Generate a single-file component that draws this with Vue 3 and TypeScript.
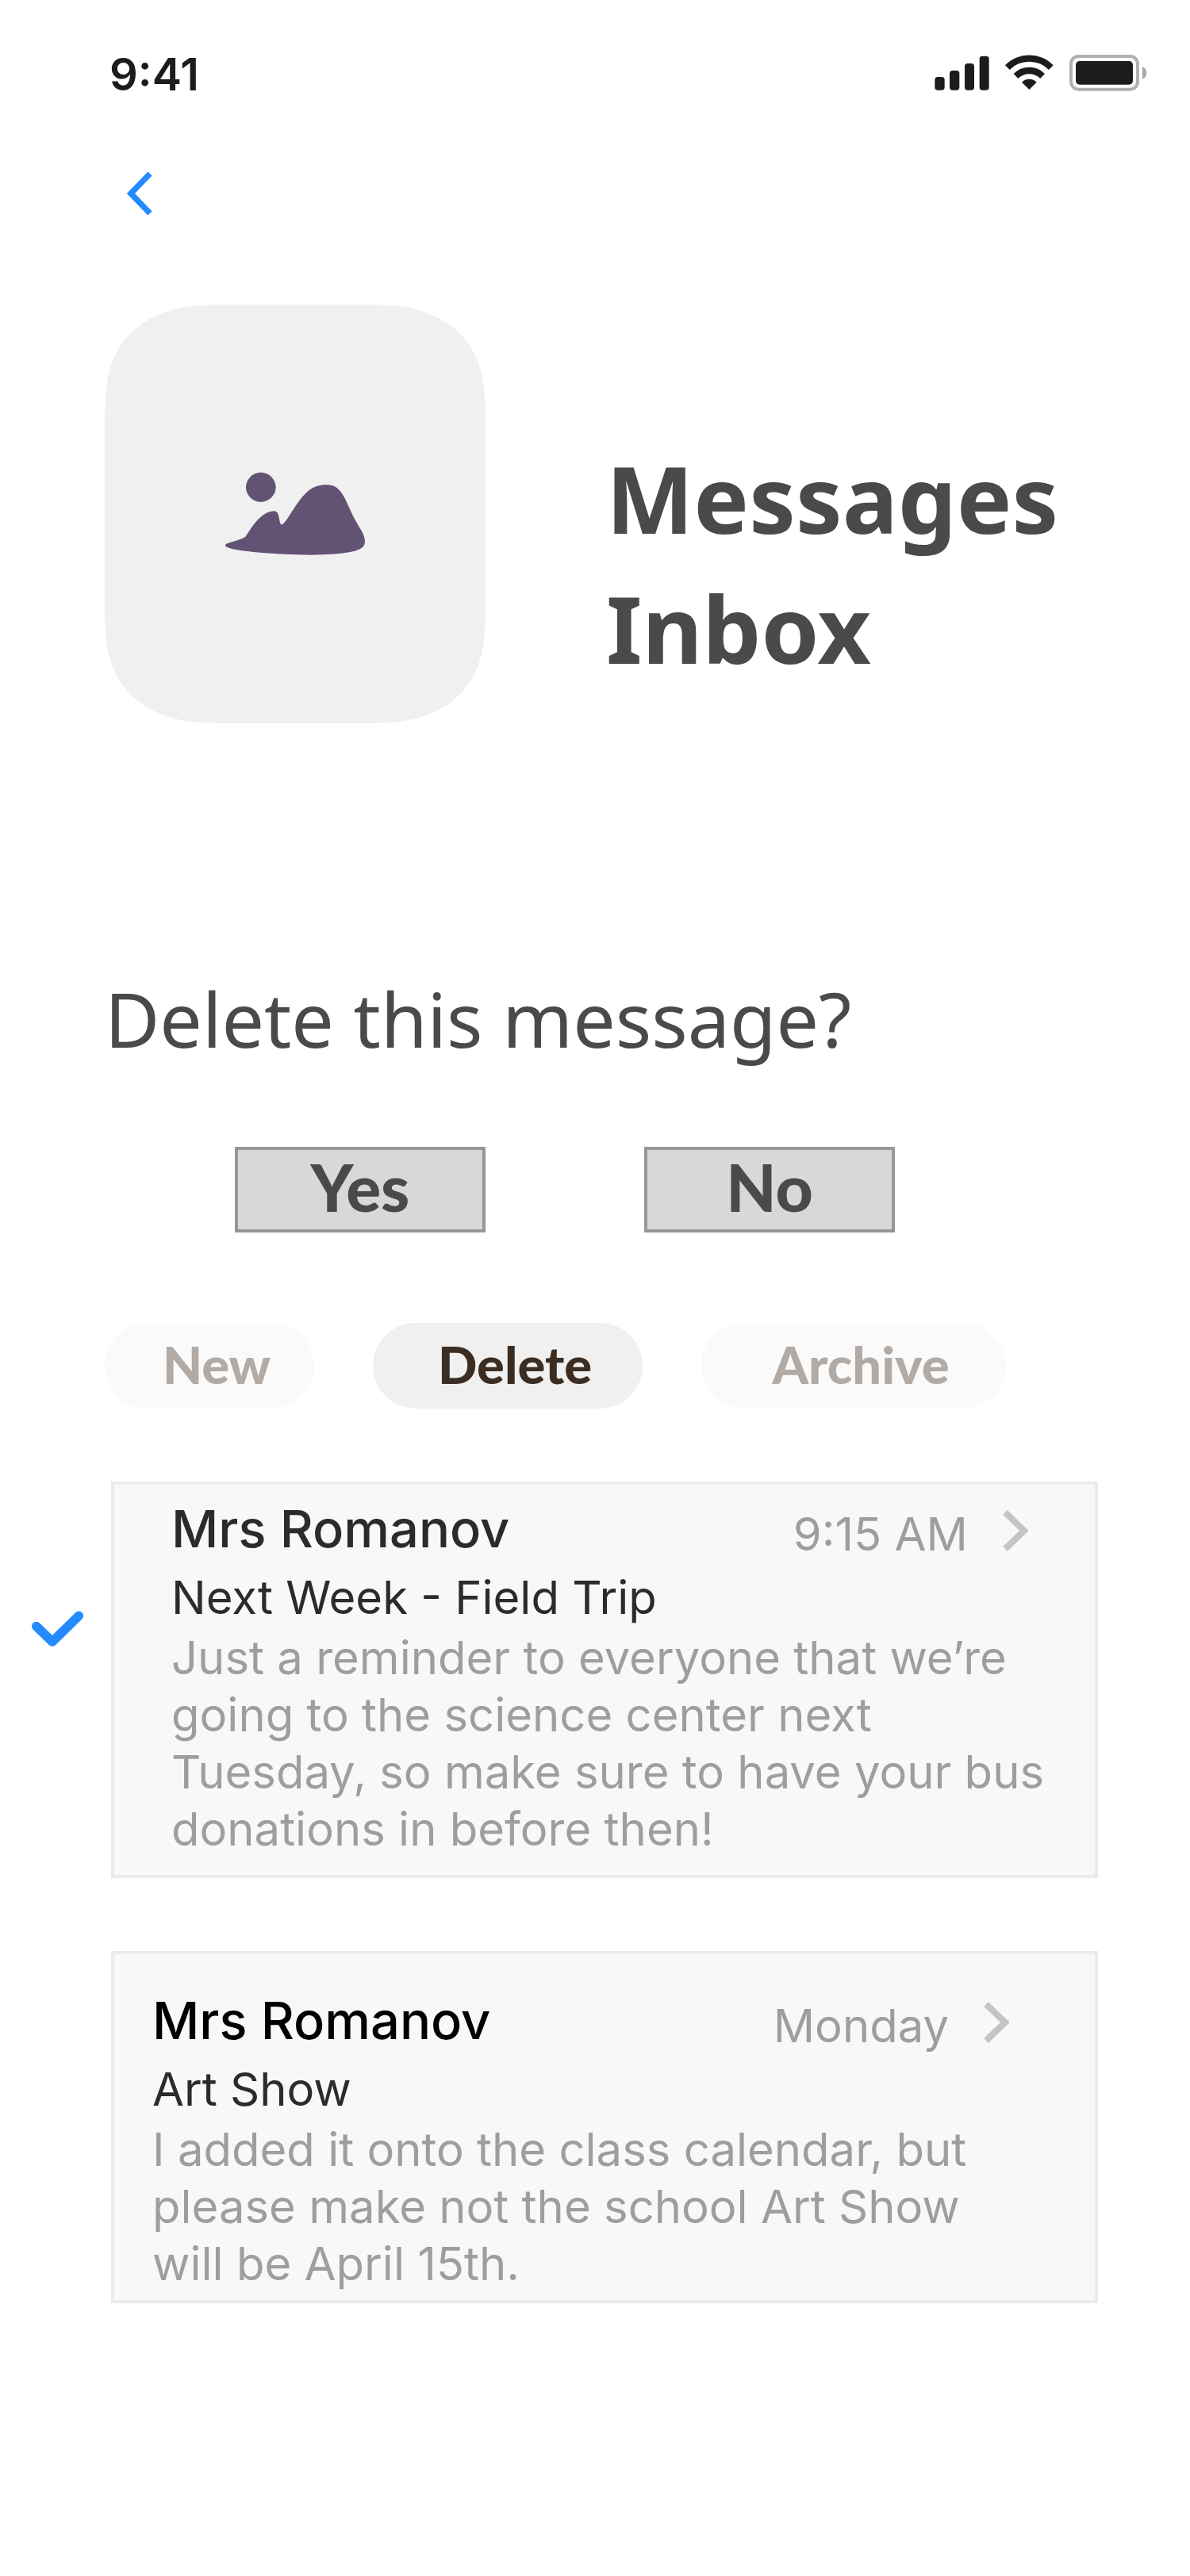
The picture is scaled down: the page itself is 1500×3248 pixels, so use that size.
<script setup lang="ts">
import { ref } from 'vue'

interface Message {
  id: number
  sender: string
  time: string
  subject: string
  body: string
  unread: boolean
  selected: boolean
}

const tabs = ['New', 'Delete', 'Archive'] as const
type Tab = (typeof tabs)[number]
const activeTab = ref<Tab>('Delete')

const messages = ref<Message[]>([
  {
    id: 1,
    sender: 'Mrs Romanov',
    time: '9:15 AM',
    subject: 'Next Week - Field Trip',
    body: 'Just a reminder to everyone that we’re going to the science center next Tuesday, so make sure to have your bus donations in before then!',
    unread: false,
    selected: true,
  },
  {
    id: 2,
    sender: 'Mrs Romanov',
    time: 'Monday',
    subject: 'Art Show',
    body: 'I added it onto the class calendar, but please make not the school Art Show will be April 15th.',
    unread: true,
    selected: false,
  },
])

function confirmDelete(): void {
  messages.value = messages.value.filter((m) => !m.selected)
}

function cancelDelete(): void {
  messages.value.forEach((m) => (m.selected = false))
}
</script>

<template>
  <div class="screen">
    <header class="status">
      <span class="clock">9:41</span>
      <svg class="indicators" viewBox="78 78 810 168" aria-hidden="true">
        <g fill="#1c1c1e">
          <rect x="85" y="171" width="37" height="50" rx="11" />
          <rect x="141" y="147" width="37" height="74" rx="11" />
          <rect x="198" y="120" width="36" height="101" rx="11" />
          <rect x="254" y="92" width="36" height="129" rx="11" />
          <path d="M351 127A126 126 0 0 1 533 127L516 144A104 104 0 0 0 368 144Z" />
          <path d="M383 159A82 82 0 0 1 501 159L484 177A60 60 0 0 0 400 177Z" />
          <path d="M414 191A39 39 0 0 1 470 191L442 219Z" />
          <rect x="618" y="111" width="216" height="89" rx="15" />
        </g>
        <rect x="600" y="93" width="252" height="125" rx="28" fill="none" stroke="#b0b0b0" stroke-width="12" />
        <path d="M870 132C891 141 891 171 870 180Z" fill="#a8a8a8" />
      </svg>
    </header>

    <nav class="nav">
      <button class="back" type="button" aria-label="Back">
        <svg viewBox="0 0 32 56" width="32" height="56" aria-hidden="true">
          <path d="M29 3L5 28L29 53" fill="none" stroke="#248bff" stroke-width="7.4" />
        </svg>
      </button>
    </nav>

    <section class="hero">
      <svg class="cover" viewBox="36 39 1440 1479" preserveAspectRatio="none" aria-hidden="true">
        <path
          fill="#f0f0f0"
          d="M36 470C36 380 40 335 50 288C78 168 165 88 302 55C355 43 420 39 500 39H1012C1092 39 1157 43 1210 55C1347 88 1434 168 1462 288C1472 335 1476 380 1476 470V1087C1476 1177 1472 1222 1462 1269C1434 1389 1347 1469 1210 1502C1157 1514 1092 1518 1012 1518H500C420 1518 355 1514 302 1502C165 1469 78 1389 50 1269C40 1222 36 1177 36 1087Z"
        />
        <g fill="#625375">
          <path d="M626 632C661 632 683 660 683 684C683 709 660 736 626 736C592 736 570 709 570 684C570 660 592 632 626 632Z" />
          <path
            d="M492 889C494 878 547 874 569 858C586 836 622 770 677 768C702 770 692 815 706 816C728 812 775 695 840 680C860 674 888 674 905 681C942 699 952 747 987 806C1004 836 1020 852 1020 877C1020 900 990 908 960 914C900 925 800 925 700 920C620 915 490 906 492 889Z"
          />
        </g>
      </svg>
      <h1 class="title">Messages<br />Inbox</h1>
    </section>

    <section class="confirm">
      <h2 class="question">Delete this message?</h2>
      <div class="answers">
        <button class="answer" type="button" @click="confirmDelete">Yes</button>
        <button class="answer" type="button" @click="cancelDelete">No</button>
      </div>
    </section>

    <div class="tabs">
      <button
        v-for="tab in tabs"
        :key="tab"
        type="button"
        class="tab"
        :class="[tab.toLowerCase(), { active: tab === activeTab }]"
        :aria-pressed="tab === activeTab"
        @click="activeTab = tab"
      >
        {{ tab }}
      </button>
    </div>

    <ul class="list">
      <li v-for="message in messages" :key="message.id" class="row">
        <label class="tick">
          <input v-model="message.selected" type="checkbox" :aria-label="`Select ${message.subject}`" />
          <svg v-if="message.selected" viewBox="0 0 68 48" width="68" height="48" aria-hidden="true">
            <path
              d="M6.8 20.5L27 40L60.3 7.3"
              fill="none"
              stroke="#248bff"
              stroke-width="11.6"
              stroke-linecap="round"
              stroke-linejoin="round"
            />
          </svg>
        </label>
        <article class="card" :class="{ unread: message.unread }">
          <div class="head">
            <h3 class="sender">{{ message.sender }}</h3>
            <time class="time">{{ message.time }}</time>
            <svg class="chevron" viewBox="0 0 32 56" width="32" height="56" aria-hidden="true">
              <path d="M3 7L27 30L3 53" fill="none" stroke="#c4c4c6" stroke-width="8" />
            </svg>
          </div>
          <p class="subject">{{ message.subject }}</p>
          <p class="body">{{ message.body }}</p>
        </article>
      </li>
    </ul>
  </div>
</template>

<style>
body {
  background: #fff;
}
</style>

<style scoped>
.screen {
  min-height: 100vh;
  box-sizing: border-box;
  background: #fff;
  font-family: Inter, 'Liberation Sans', sans-serif;
}

h1,
h2,
h3,
p,
ul {
  margin: 0;
  padding: 0;
}

button {
  padding: 0;
  border: 0;
  background: none;
  font-family: Lato, 'Open Sans', sans-serif;
  font-weight: 900;
  text-align: center;
  cursor: pointer;
}

svg {
  display: block;
  flex: none;
}

.status {
  display: flex;
  justify-content: space-between;
  align-items: center;
  padding: 60px 54px 0 138px;
}

.clock {
  color: #1c1c1e;
  font-size: 56px;
  font-weight: 600;
  line-height: 68px;
}

.indicators {
  width: 270px;
  height: 56px;
}

.nav {
  display: flex;
  padding: 88px 160px 112px;
}

.hero {
  display: flex;
  align-items: flex-end;
  gap: 152px;
  padding-left: 132px;
}

.cover {
  width: 480px;
  height: 528px;
}

.title {
  padding-bottom: 38px;
  color: #4a4a4a;
  font-family: 'Noto Sans', 'Open Sans', sans-serif;
  font-size: 117px;
  font-weight: 700;
  line-height: 164px;
}

.confirm {
  padding-top: 314px;
}

.question {
  padding-left: 132px;
  color: #4a4a4a;
  font-family: 'Noto Sans', 'Open Sans', sans-serif;
  font-size: 95px;
  font-weight: 400;
  line-height: 116px;
}

.answers {
  display: flex;
  gap: 200px;
  padding: 104px 0 0 296px;
}

.answer {
  box-sizing: border-box;
  width: 316px;
  padding-bottom: 8px;
  border: 4px solid #979797;
  background: #d8d8d8;
  color: #4a4a4a;
  font-size: 82px;
  line-height: 92px;
}

.tabs {
  display: flex;
  gap: 74px;
  padding: 114px 132px 92px;
}

.tab {
  box-sizing: border-box;
  padding: 0 0 4px 18px;
  border-radius: 54px;
  background: #fafafa;
  color: #b1aaa5;
  font-size: 65px;
  line-height: 104px;
}

.tab.new {
  width: 264px;
}

.tab.delete {
  width: 340px;
}

.tab.archive {
  width: 384px;
}

.tab.active {
  background: #f0f0f0;
  color: #3c2d22;
}

.list {
  display: flex;
  flex-direction: column;
  gap: 92px;
  list-style: none;
}

.row {
  display: flex;
  padding-right: 116px;
}

.tick {
  position: relative;
  flex: none;
  box-sizing: border-box;
  width: 140px;
  padding: 162px 0 0 39px;
  cursor: pointer;
}

.tick input {
  position: absolute;
  inset: 0;
  width: 100%;
  height: 100%;
  margin: 0;
  opacity: 0;
}

.card {
  flex: 1;
  min-width: 0;
  padding: 14px 56px 22px 72px;
  border: 4px solid #ebebeb;
  background: #f8f8f8;
}

.card.unread {
  padding: 42px 80px 10px 48px;
}

.head {
  display: flex;
  align-items: flex-end;
  padding-right: 28px;
}

.sender {
  flex: 1;
  color: #2b2b2b;
  font-size: 65px;
  font-weight: 500;
  line-height: 84px;
}

.unread .sender {
  color: #000;
}

.time {
  color: #9e9ea2;
  font-size: 58px;
  line-height: 72px;
}

.chevron {
  margin: 0 0 14px 44px;
}

.subject {
  padding: 8px 0 4px;
  color: #2b2b2b;
  font-size: 58px;
  line-height: 72px;
}

.body {
  color: #9e9ea2;
  font-size: 58px;
  line-height: 72px;
}
</style>
